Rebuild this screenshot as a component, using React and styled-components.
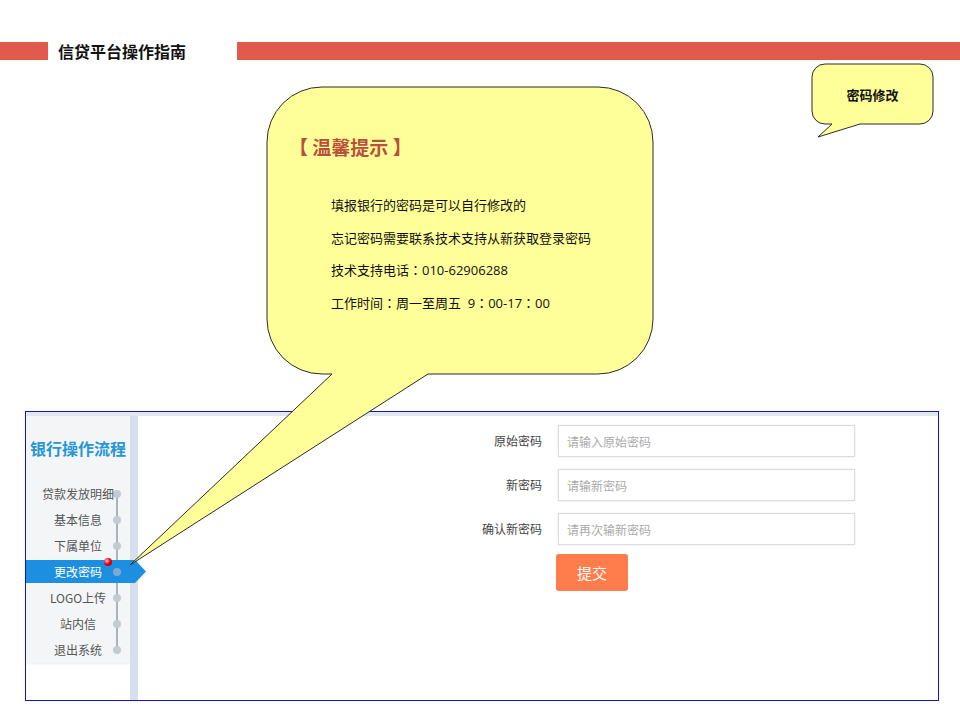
import React from 'react';
import styled, { createGlobalStyle } from 'styled-components';

const GlobalStyle = createGlobalStyle`
  body {
    margin: 0;
    background: #fff;
    font-family: "Noto Sans CJK SC", "Liberation Sans", sans-serif;
  }
`;

const Page = styled.div`
  position: relative;
  width: 960px;
  height: 720px;
  overflow: hidden;
  padding-top: 42px;
  box-sizing: border-box;
`;

const Header = styled.div`
  display: flex;
  align-items: center;
  height: 18px;
`;

const HeaderBar = styled.div`
  height: 18px;
  background: #e05a4e;
  width: ${p => (p.$w ? `${p.$w}px` : 'auto')};
  flex: ${p => (p.$w ? 'none' : 1)};
`;

const HeaderTitle = styled.h1`
  margin: 0 0 0 10px;
  width: 179px;
  font-size: 16px;
  font-weight: 700;
  line-height: 18px;
  color: #111;
`;

const Frame = styled.div`
  margin: 351px 0 0 25px;
  width: 914px;
  height: 290px;
  box-sizing: border-box;
  border: 1px solid #1414c8;
  display: flex;
  flex-direction: column;
`;

const TopStrip = styled.div`
  flex: none;
  height: 4px;
  background: #e2e7ed;
`;

const FrameBody = styled.div`
  flex: 1;
  display: grid;
  grid-template-columns: 104px 8px 1fr;
`;

const Sidebar = styled.aside`
  align-self: start;
  background: #f4f5f7;
  box-shadow: 0 1px 2px rgba(0, 0, 0, 0.08);
`;

const SideTitle = styled.div`
  height: 65px;
  line-height: 65px;
  text-align: center;
  font-size: 16px;
  font-weight: 700;
  color: #2497d6;
`;

const Menu = styled.ul`
  position: relative;
  margin: 0;
  padding: 0;
  list-style: none;

  &::before {
    content: '';
    position: absolute;
    left: 90px;
    top: 13px;
    bottom: 13px;
    width: 2px;
    background: #a9b3c0;
  }
`;

const MenuItem = styled.li`
  position: relative;
  height: 26px;
  line-height: 26px;
  text-align: center;
  font-size: 12px;
  color: ${p => (p.$active ? '#fff' : '#555')};

  &::before {
    content: '';
    display: ${p => (p.$active ? 'block' : 'none')};
    position: absolute;
    left: 0;
    top: 1px;
    width: 120px;
    height: 23px;
    background: #1c8fe0;
    clip-path: polygon(0 0, 109px 0, 120px 50%, 109px 100%, 0 100%);
  }

  &::after {
    content: '';
    position: absolute;
    left: 87px;
    top: 9px;
    width: 8px;
    height: 8px;
    border-radius: 50%;
    background: ${p => (p.$active ? '#7fa9d0' : '#c4cad3')};
  }
`;

const ItemText = styled.span`
  position: relative;
  z-index: 1;
`;

const RedDot = styled.span`
  position: absolute;
  left: 78px;
  top: -1px;
  width: 8px;
  height: 8px;
  border-radius: 50%;
  background: radial-gradient(circle at 35% 35%, #ff8a8a 0 15%, #e60012 45%, #a0000a 100%);
  z-index: 2;
`;

const Strip = styled.div`
  background: #d6e0ec;
`;

const Main = styled.div`
  padding-top: 9px;
`;

const Form = styled.form`
  display: grid;
  grid-template-columns: 404px 297px;
  grid-auto-rows: 32px;
  column-gap: 16px;
  row-gap: 12px;
`;

const Label = styled.label`
  text-align: right;
  line-height: 32px;
  font-size: 12px;
  color: #444;
`;

const Input = styled.input`
  box-sizing: border-box;
  height: 32px;
  border: 1px solid #dcdcdc;
  box-shadow: 0 0 2px rgba(0, 0, 0, 0.1);
  padding: 0 8px;
  font-family: inherit;
  font-size: 12px;
  outline: none;

  &::placeholder {
    color: #aaa;
  }
`;

const SubmitButton = styled.button`
  grid-column: 2;
  justify-self: start;
  width: 72px;
  height: 37px;
  margin: -3px 0 0 -2px;
  border: none;
  border-radius: 3px;
  background: #ff7c4c;
  color: #fff;
  font-family: inherit;
  font-size: 15px;
`;

const Callout = styled.div`
  position: absolute;
  left: ${p => p.$x}px;
  top: ${p => p.$y}px;
  width: ${p => p.$w}px;
  height: ${p => p.$h}px;
  z-index: 2;
`;

const CalloutShape = styled.svg`
  position: absolute;
  left: 0;
  top: 0;
  overflow: visible;
`;

const TipBody = styled.div`
  position: relative;
  box-sizing: border-box;
  height: 100%;
  padding: 48px 0 0 22px;
`;

const TipTitle = styled.div`
  font-size: 19px;
  font-weight: 700;
  line-height: 24px;
  color: #b9503c;
`;

const TipLines = styled.div`
  margin-top: 30px;
  padding-left: 42px;
`;

const TipLine = styled.p`
  margin: 0;
  font-family: "Open Sans", "Noto Sans CJK TC", sans-serif;
  font-size: 13px;
  line-height: 32.5px;
  white-space: pre;
  color: #111;
`;

const SmallBody = styled.div`
  position: relative;
  height: 100%;
  display: flex;
  align-items: center;
  justify-content: center;
  font-size: 13px;
  font-weight: 700;
  color: #111;
`;

const bubblePath = (w, h, r, tail) => {
  const [b1, tx, ty, b2] = tail;
  return [
    `M ${r} 0 H ${w - r}`,
    `A ${r} ${r} 0 0 1 ${w} ${r}`,
    `V ${h - r}`,
    `A ${r} ${r} 0 0 1 ${w - r} ${h}`,
    `H ${b2} L ${tx} ${ty} L ${b1} ${h}`,
    `H ${r}`,
    `A ${r} ${r} 0 0 1 0 ${h - r}`,
    `V ${r}`,
    `A ${r} ${r} 0 0 1 ${r} 0 Z`,
  ].join(' ');
};

const Bubble = ({ x, y, w, h, r, tail, children }) => (
  <Callout $x={x} $y={y} $w={w} $h={h}>
    <CalloutShape width={w} height={h}>
      <path d={bubblePath(w, h, r, tail)} fill="#ffff99" stroke="#2b2b2b" strokeWidth="1" />
    </CalloutShape>
    {children}
  </Callout>
);

const menu = ['贷款发放明细', '基本信息', '下属单位', '更改密码', 'LOGO上传', '站内信', '退出系统'];

const tips = [
  '填报银行的密码是可以自行修改的',
  '忘记密码需要联系技术支持从新获取登录密码',
  '技术支持电话：010-62906288',
  '工作时间：周一至周五  9：00-17：00',
];

const App = () => (
  <>
    <GlobalStyle />
    <Page>
      <Header>
        <HeaderBar $w={48} />
        <HeaderTitle>信贷平台操作指南</HeaderTitle>
        <HeaderBar />
      </Header>

      <Frame>
        <TopStrip />
        <FrameBody>
          <Sidebar>
            <SideTitle>银行操作流程</SideTitle>
            <Menu>
              {menu.map(item => (
                <MenuItem key={item} $active={item === '更改密码'}>
                  {item === '更改密码' && <RedDot />}
                  <ItemText>{item}</ItemText>
                </MenuItem>
              ))}
            </Menu>
          </Sidebar>
          <Strip />
          <Main>
            <Form onSubmit={e => e.preventDefault()}>
              <Label>原始密码</Label>
              <Input type="password" placeholder="请输入原始密码" />
              <Label>新密码</Label>
              <Input type="password" placeholder="请输新密码" />
              <Label>确认新密码</Label>
              <Input type="password" placeholder="请再次输新密码" />
              <SubmitButton type="submit">提交</SubmitButton>
            </Form>
          </Main>
        </FrameBody>
      </Frame>

      <Bubble x={267} y={87} w={386} h={287} r={55} tail={[65, -137, 478, 161]}>
        <TipBody>
          <TipTitle>【 温馨提示 】</TipTitle>
          <TipLines>
            {tips.map(t => (
              <TipLine key={t}>{t}</TipLine>
            ))}
          </TipLines>
        </TipBody>
      </Bubble>

      <Bubble x={812} y={64} w={121} h={60} r={13} tail={[20, 6, 73, 48]}>
        <SmallBody>密码修改</SmallBody>
      </Bubble>
    </Page>
  </>
);

export default App;
